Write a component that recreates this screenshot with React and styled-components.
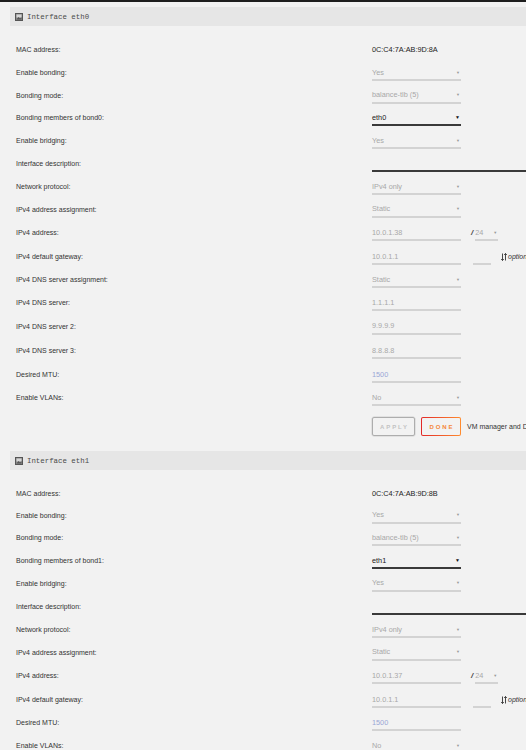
import React from 'react'
import styled, { createGlobalStyle } from 'styled-components'

const GlobalStyle = createGlobalStyle`
  html, body {
    margin: 0;
    padding: 0;
    background: #f2f2f2;
    overflow: hidden;
  }
  body {
    font-family: "Liberation Sans", Arial, sans-serif;
    color: #333;
  }
`

const eth0 = [
  { label: 'MAC address:', type: 'text', value: '0C:C4:7A:AB:9D:8A' },
  { label: 'Enable bonding:', type: 'select', value: 'Yes' },
  { label: 'Bonding mode:', type: 'select', value: 'balance-tlb (5)', h: 22 },
  { label: 'Bonding members of bond0:', type: 'active', value: 'eth0' },
  { label: 'Enable bridging:', type: 'select', value: 'Yes' },
  { label: 'Interface description:', type: 'line' },
  { label: 'Network protocol:', type: 'select', value: 'IPv4 only' },
  { label: 'IPv4 address assignment:', type: 'select', value: 'Static', h: 22 },
  { label: 'IPv4 address:', type: 'address', value: '10.0.1.38', h: 25 },
  { label: 'IPv4 default gateway:', type: 'gateway', value: '10.0.1.1' },
  { label: 'IPv4 DNS server assignment:', type: 'select', value: 'Static' },
  { label: 'IPv4 DNS server:', type: 'input', value: '1.1.1.1' },
  { label: 'IPv4 DNS server 2:', type: 'input', value: '9.9.9.9', h: 24 },
  { label: 'IPv4 DNS server 3:', type: 'input', value: '8.8.8.8', h: 25 },
  { label: 'Desired MTU:', type: 'mtu', value: '1500' },
  { label: 'Enable VLANs:', type: 'select', value: 'No' },
]

const eth1 = [
  { label: 'MAC address:', type: 'text', value: '0C:C4:7A:AB:9D:8B', h: 22 },
  { label: 'Enable bonding:', type: 'select', value: 'Yes', h: 22 },
  { label: 'Bonding mode:', type: 'select', value: 'balance-tlb (5)' },
  { label: 'Bonding members of bond1:', type: 'active', value: 'eth1' },
  { label: 'Enable bridging:', type: 'select', value: 'Yes', h: 22 },
  { label: 'Interface description:', type: 'line', h: 24 },
  { label: 'Network protocol:', type: 'select', value: 'IPv4 only' },
  { label: 'IPv4 address assignment:', type: 'select', value: 'Static', h: 22 },
  { label: 'IPv4 address:', type: 'address', value: '10.0.1.37', h: 25 },
  { label: 'IPv4 default gateway:', type: 'gateway', value: '10.0.1.1' },
  { label: 'Desired MTU:', type: 'mtu', value: '1500' },
  { label: 'Enable VLANs:', type: 'select', value: 'No' },
]

const ImageIcon = () => (
  <svg width="8" height="8" viewBox="0 0 8 8">
    <rect x="0.5" y="0.5" width="7" height="7" fill="#8a8a8a" stroke="#555" />
    <rect x="1.5" y="1.5" width="5" height="3" fill="#d6d6d6" />
    <path d="M1.5 6.5 L3.5 4 L5 5.5 L6.5 4.2 L6.5 6.5 Z" fill="#555" />
  </svg>
)

const SortIcon = () => (
  <svg width="6" height="8" viewBox="0 0 6 8">
    <path d="M1.5 0.5 V7.5 M0.2 6 L1.5 7.5 L2.8 6" stroke="#333" strokeWidth="0.9" fill="none" />
    <path d="M4.5 7.5 V0.5 M3.2 2 L4.5 0.5 L5.8 2" stroke="#333" strokeWidth="0.9" fill="none" />
  </svg>
)

const Field = ({ row }) => {
  switch (row.type) {
    case 'text':
      return <Plain>{row.value}</Plain>
    case 'select':
      return (
        <Control>
          <span>{row.value}</span>
          <Arrow>▼</Arrow>
        </Control>
      )
    case 'active':
      return (
        <Control $active>
          <span>{row.value}</span>
          <Arrow $active>▼</Arrow>
        </Control>
      )
    case 'line':
      return <Control $active $wide />
    case 'mtu':
      return <Control $tone="#9aa7d6">{row.value}</Control>
    case 'address':
      return (
        <Inline>
          <Control>{row.value}</Control>
          <Slash>/</Slash>
          <Control $w={23}>
            <span>24</span>
            <Arrow>▼</Arrow>
          </Control>
        </Inline>
      )
    case 'gateway':
      return (
        <Inline>
          <Control>{row.value}</Control>
          <Control $w={18} $ml={12} />
          <Options>
            <SortIcon />
            <em>options</em>
          </Options>
        </Inline>
      )
    default:
      return <Control>{row.value}</Control>
  }
}

const Section = ({ name, rows, buttons }) => (
  <Block>
    <Header>
      <ImageIcon />
      <Title>Interface {name}</Title>
    </Header>
    <Body>
      {rows.map((row) => (
        <Row key={row.label} $h={row.h}>
          <Label>{row.label}</Label>
          <Field row={row} />
        </Row>
      ))}
      {buttons && (
        <ButtonRow>
          <Button>APPLY</Button>
          <Button $done>DONE</Button>
          <Note>VM manager and Docker service must be stopped to change</Note>
        </ButtonRow>
      )}
    </Body>
  </Block>
)

export default function App() {
  return (
    <Page>
      <GlobalStyle />
      <TopBar />
      <Section name="eth0" rows={eth0} buttons />
      <Section name="eth1" rows={eth1} />
    </Page>
  )
}

const Page = styled.div`
  width: 526px;
  height: 750px;
  overflow: hidden;
  background: #f2f2f2;
`

const TopBar = styled.div`
  height: 2px;
  background: #1e1e1e;
`

const Block = styled.section`
  padding-top: 5px;

  & + & {
    padding-top: 15px;
  }
`

const Header = styled.div`
  display: flex;
  align-items: center;
  gap: 4px;
  height: 19px;
  margin-left: 10px;
  padding-left: 5px;
  background: #e6e6e6;
`

const Title = styled.span`
  font-family: "Liberation Mono", "DejaVu Sans Mono", monospace;
  font-size: 7.4px;
  color: #4a4a4a;
  white-space: pre;
`

const Body = styled.div`
  padding: 12px 0 0 16px;
`

const Row = styled.div`
  display: grid;
  grid-template-columns: 356px auto;
  align-items: center;
  height: ${({ $h }) => $h || 23}px;
  white-space: nowrap;
`

const Label = styled.span`
  font-size: 7px;
  color: #333;
`

const Plain = styled.span`
  font-size: 7.3px;
  color: #222;
`

const Control = styled.div`
  display: flex;
  align-items: center;
  justify-content: space-between;
  flex-shrink: 0;
  box-sizing: border-box;
  width: ${({ $wide, $w }) => ($wide ? '170px' : `${$w || 89}px`)};
  height: 16px;
  margin-top: 1px;
  margin-left: ${({ $ml }) => $ml || 0}px;
  padding-right: 1px;
  font-size: 7.3px;
  color: ${({ $active, $tone }) => $tone || ($active ? '#222' : '#a8a8a8')};
  border-bottom: 2px solid ${({ $active }) => ($active ? '#3a3a3a' : '#d3d3d3')};
`

const Arrow = styled.span`
  font-size: ${({ $active }) => ($active ? 5 : 4)}px;
  color: ${({ $active }) => ($active ? '#111' : '#999')};
`

const Inline = styled.div`
  display: flex;
  align-items: center;
`

const Slash = styled.span`
  margin: 0 2px 0 10px;
  font-size: 8px;
  font-style: italic;
  font-weight: bold;
  color: #444;
`

const Options = styled.span`
  display: flex;
  align-items: center;
  gap: 1px;
  margin-left: 10px;
  font-size: 7px;
  color: #333;
`

const ButtonRow = styled.div`
  display: flex;
  align-items: center;
  gap: 6px;
  margin: 8px 0 0 356px;
  white-space: nowrap;
`

const Button = styled.div`
  flex-shrink: 0;
  box-sizing: border-box;
  width: ${({ $done }) => ($done ? 40 : 43)}px;
  height: 19px;
  display: flex;
  align-items: center;
  justify-content: center;
  padding-left: 2px;
  border-radius: 2px;
  font-size: 6px;
  font-weight: bold;
  letter-spacing: 1.9px;
  color: ${({ $done }) => ($done ? '#f5873a' : '#c2c2c2')};
  border: 1px solid ${({ $done }) => ($done ? 'transparent' : '#adadad')};
  box-shadow: ${({ $done }) => ($done ? 'none' : '0 0 0 0.5px #d0d0d0')};
  background: ${({ $done }) =>
    $done
      ? 'linear-gradient(#f2f2f2, #f2f2f2) padding-box, linear-gradient(90deg, #e22828, #ff8c2f) border-box'
      : 'transparent'};
`

const Note = styled.span`
  font-size: 7px;
  color: #333;
`
